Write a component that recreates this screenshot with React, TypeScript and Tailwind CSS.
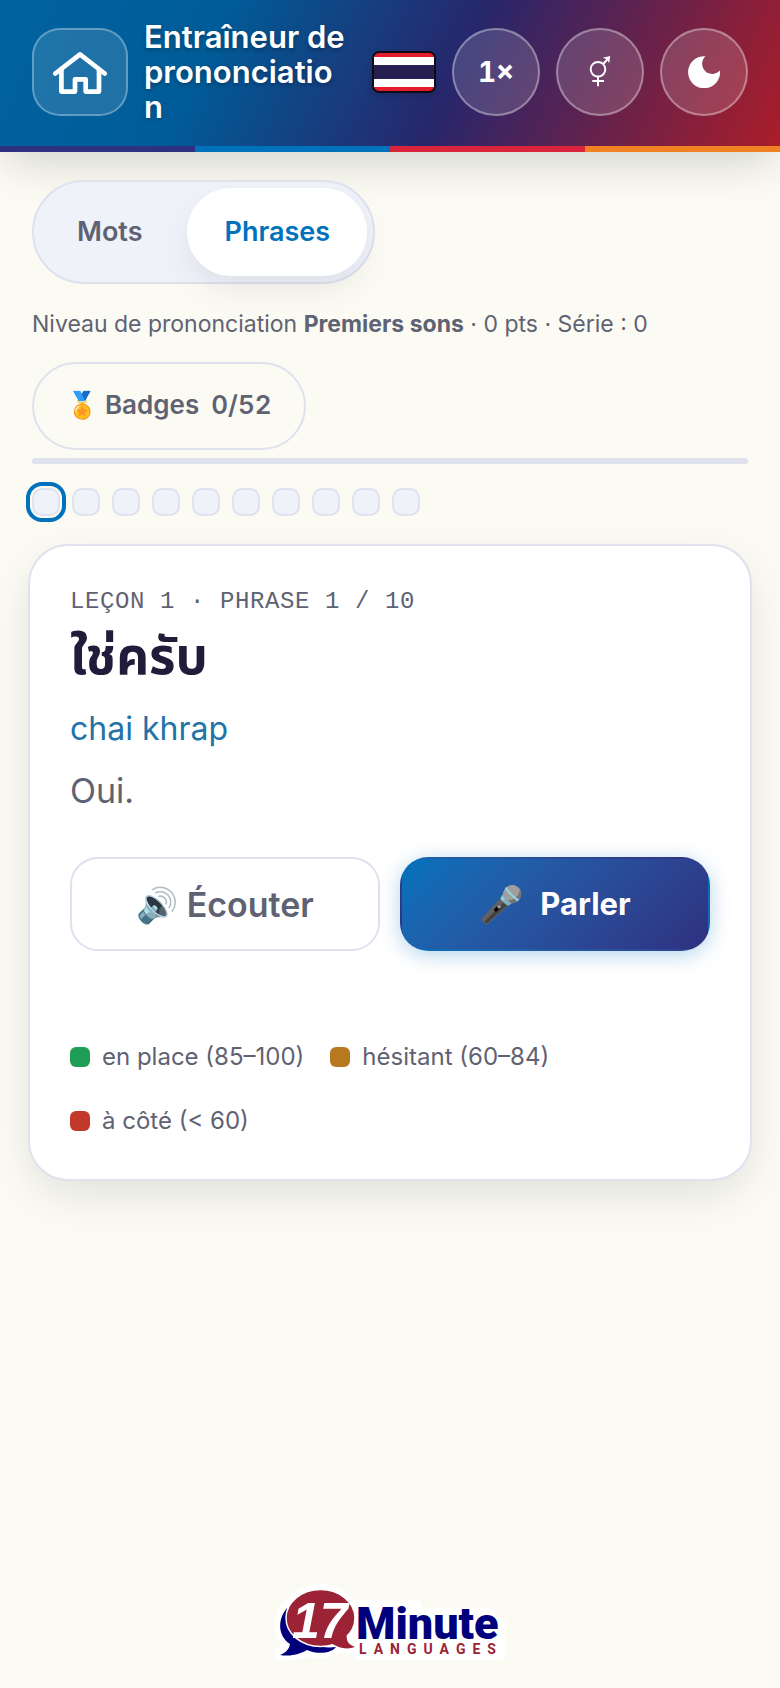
import React, { useState } from 'react'

type Mode = 'mots' | 'phrases'

const modes: { key: Mode; label: string }[] = [
  { key: 'mots', label: 'Mots' },
  { key: 'phrases', label: 'Phrases' },
]

const legend = [
  { label: 'en place (85–100)', color: 'bg-[#1f9d55]' },
  { label: 'hésitant (60–84)', color: 'bg-[#b7791f]' },
  { label: 'à côté (< 60)', color: 'bg-[#c0392b]' },
]

const stripes = ['bg-[#2e3180]', 'bg-[#0072bc]', 'bg-[#d9243b]', 'bg-[#f08224]']

const roundButton =
  'flex size-[88px] shrink-0 items-center justify-center rounded-full border-2 border-white/35 bg-white/15 text-white'

function HomeIcon() {
  return (
    <svg width="56" height="48" viewBox="1 0 56 48" fill="none" stroke="currentColor" strokeWidth="4.700" strokeLinecap="round" strokeLinejoin="round">
      <path d="M4.300 25.500L29 6.300l24.700 19.200" />
      <path d="M10.400 22v21.600H24V31.300h10.700v12.300H48V22" />
    </svg>
  )
}

function ThaiFlag() {
  return (
    <svg width="64" height="42" viewBox="0 0 64 42" className="shrink-0 drop-shadow-md" role="img" aria-label="Thaï">
      <rect width="64" height="42" rx="7" fill="#0d0b16" />
      <clipPath id="flag">
        <rect x="2" y="2" width="60" height="38" rx="5" />
      </clipPath>
      <g clipPath="url(#flag)">
        <rect width="64" height="42" fill="#e31d2d" />
        <rect y="6" width="64" height="30" fill="#fff" />
        <rect y="14" width="64" height="14" fill="#271f50" />
      </g>
    </svg>
  )
}

function GenderIcon() {
  return (
    <svg width="24" height="32" viewBox="0 0 24 32" fill="none" stroke="currentColor" strokeWidth="2">
      <circle cx="10" cy="13.300" r="7.300" />
      <path d="M15.200 8L20.500 2.200M10 20.600V30.300M4.300 25h11.700" />
      <path d="M22.200 0l-1 7.200l-2.200-3.800l-4.200-1.600z" fill="currentColor" stroke="none" />
    </svg>
  )
}

function MoonIcon() {
  return (
    <svg width="32" height="32" viewBox="0 0 32 32" fill="currentColor">
      <path d="M17.500 0.300A16 16 0 1 0 32 14.500C27 20 18.500 18.500 15.500 13C13 8.500 14 3.500 17.500 0.300z" />
    </svg>
  )
}

function Logo() {
  return (
    <svg width="240" height="84" viewBox="0 0 240 84" role="img" aria-label="17 Minute Languages">
      <g stroke="#fff" strokeWidth="12" strokeLinejoin="round" fill="#fff">
        <ellipse cx="50" cy="38" rx="34" ry="28" />
        <path d="M16 28C8 40 8 56 20 64L11 74C24 76 33 72 37 70C48 74 60 73 66 67z" />
        <path d="M62 62C68 67 76 69 84 67L76 50z" />
        <path d="M90 26h56v8h74v10h10v30H90z" />
      </g>
      <path d="M17 28C7 40 8 56 20 64C19 70 15 73 10 75C22 77 32 73 37 70C48 75 62 73 66 67C44 70 12 58 17 28z" fill="#00007d" />
      <ellipse cx="50.500" cy="38" rx="34.500" ry="28.500" fill="#9b2335" stroke="#fff" strokeWidth="1.500" />
      <path d="M60 62C67 68 77 70 85 67C77 64 76 60 77 52z" fill="#9b2335" />
      <text x="22" y="58" fontFamily="Liberation Sans, Arial, sans-serif" fontWeight="700" fontStyle="italic" fontSize="50" fill="#fff">
        17
      </text>
      <text x="86" y="59" fontFamily="Roboto, sans-serif" fontWeight="900" fontSize="45" fill="#00007d">
        Minute
      </text>
      <text x="89" y="74" fontFamily="Roboto, sans-serif" fontWeight="700" fontSize="14" letterSpacing="7" fill="#9b2335">
        LANGUAGES
      </text>
    </svg>
  )
}

export default function App() {
  const [mode, setMode] = useState<Mode>('phrases')
  const [current, setCurrent] = useState(0)

  return (
    <div className="flex min-h-screen flex-col bg-[#fbfbf3] font-['Inter','Noto_Sans',sans-serif] text-[#5f6273]">
      {/* Header */}
      <header className="shadow-[0_12px_44px_-6px_rgba(20,20,40,0.2)]">
        <div className="flex items-center gap-4 bg-[linear-gradient(115deg,#0063a0_0%,#005c98_27%,#28266b_58%,#ab1d29_100%)] px-8 pt-[19px] pb-[22px]">
          <a
            href="#"
            aria-label="Accueil"
            className="flex h-[88px] w-24 shrink-0 items-center justify-center rounded-[28px] border-2 border-white/30 bg-white/12 text-white"
          >
            <HomeIcon />
          </a>
          <h1 className="min-w-0 flex-1 pr-2 text-[31px] leading-[35px] font-semibold wrap-anywhere text-white [text-shadow:0_2px_4px_rgba(0,0,0,0.3)]">
            Entraîneur de prononciation
          </h1>
          <ThaiFlag />
          <button type="button" className={`${roundButton} text-[28px] font-bold tabular-nums`}>1×</button>
          <button type="button" aria-label="Genre" className={roundButton}>
            <GenderIcon />
          </button>
          <button type="button" aria-label="Mode sombre" className={roundButton}>
            <MoonIcon />
          </button>
        </div>
        <div className="grid h-[6px] grid-cols-4">
          {stripes.map((color) => (
            <div key={color} className={color} />
          ))}
        </div>
      </header>

      <main className="px-7 pt-7">
        {/* Mode + progress */}
        <div className="px-1">
          <div className="inline-flex gap-2 rounded-full border-2 border-[#dfe1ee] bg-[#eff2f9] p-[6px]">
            {modes.map(({ key, label }) => (
              <button
                key={key}
                type="button"
                onClick={() => setMode(key)}
                className={`h-[88px] rounded-full px-[37px] text-[27px] font-semibold ${
                  mode === key ? 'bg-white text-[#0072bc] shadow-[0_16px_40px_-8px_rgba(20,20,40,0.1)]' : ''
                }`}
              >
                {label}
              </button>
            ))}
          </div>

          <p className="mt-[22px] text-[23px] leading-9">
            Niveau de prononciation <strong className="font-bold">Premiers sons</strong> · 0 pts · Série : 0
          </p>

          <button
            type="button"
            className="mt-5 flex h-[88px] items-center gap-3 rounded-full border-2 border-[#dfe1ee] px-8 pb-1 text-[26px] font-semibold tabular-nums"
          >
            <span>🏅 Badges</span>
            <span>0/52</span>
          </button>

          <div className="mt-2 h-[6px] rounded-full bg-[#dfe1ec]" />

          <div className="mt-6 flex gap-3">
            {Array.from({ length: 10 }, (_, i) => (
              <button
                key={i}
                type="button"
                aria-label={`Phrase ${i + 1}`}
                onClick={() => setCurrent(i)}
                className={`size-7 rounded-[10px] border-2 border-[#dfe1ee] bg-[#eff2f9] ${
                  current === i ? 'outline-4 outline-offset-2 outline-[#0072bc]' : ''
                }`}
              />
            ))}
          </div>
        </div>

        {/* Exercise card */}
        <section className="mt-7 rounded-[40px] border-2 border-[#dfe1ee] bg-white px-10 pt-[38px] pb-[26px] shadow-[0_16px_48px_-6px_rgba(20,20,40,0.12)]">
          <p className="font-['Liberation_Mono',monospace] text-2xl leading-9 tracking-wide uppercase">
            Leçon 1 · Phrase 1 / 10
          </p>
          <h2 lang="th" className="font-['Noto_Sans_Thai','Noto_Sans',sans-serif] text-[51px] leading-[77px] font-bold text-[#1f1d3a]">
            ใช่ครับ
          </h2>
          <p className="mt-2 text-[32px] leading-12 text-[#2273a8]">chai khrap</p>
          <p className="mt-3 text-[34px] leading-[52px]">Oui.</p>

          <div className="mt-10 grid grid-cols-2 gap-5">
            <button type="button" className="h-[94px] rounded-[28px] border-2 border-[#dfe1ee] text-[34px] font-semibold">
              🔊 Écouter
            </button>
            <button
              type="button"
              className="flex h-[94px] items-center justify-center gap-4 rounded-[28px] border-2 border-transparent bg-linear-135 from-[#0072bc] to-[#2e3180] text-[31px] font-bold text-white shadow-[0_4px_20px_rgba(0,114,188,0.3)]"
            >
              <span className="text-4xl">🎤</span>
              Parler
            </button>
          </div>

          <ul className="mt-[74px] flex flex-wrap gap-x-[26px] text-2xl leading-[64px]">
            {legend.map(({ label, color }) => (
              <li key={label} className="flex items-center gap-3">
                <span className={`size-5 rounded-md ${color}`} />
                {label}
              </li>
            ))}
          </ul>
        </section>
      </main>

      <footer className="mt-auto flex justify-center pb-6">
        <Logo />
      </footer>
    </div>
  )
}
